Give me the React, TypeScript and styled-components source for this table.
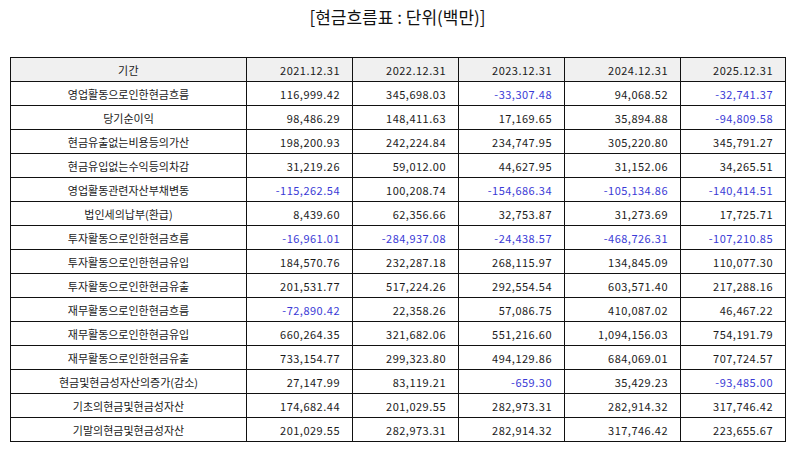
import React from "react";
import styled, { createGlobalStyle } from "styled-components";

const GlobalStyle = createGlobalStyle`
  body {
    margin: 0;
    background: #ffffff;
    font-family: "Noto Sans CJK KR", "Noto Sans", sans-serif;
    color: #1a1a1a;
  }
`;

const Page = styled.div`
  width: 795px;
  padding: 4px 10px 0;
  box-sizing: border-box;
`;

const Title = styled.h1`
  margin: 0 0 28px;
  font-size: 17px;
  font-weight: 400;
  text-align: center;
  line-height: 25px;
  color: #111;
`;

const Table = styled.table`
  width: 775px;
  border-collapse: collapse;
  table-layout: fixed;
  font-size: 11px;
`;

const HeadCell = styled.th<{ $align?: "left" | "center" | "right" }>`
  height: 23px;
  padding: 0 12px 0 0;
  border: 1px solid #111;
  background: #f0f0f0;
  font-weight: 400;
  letter-spacing: 0.5px;
  text-align: ${(p) => p.$align || "right"};
  ${(p) => (p.$align === "center" ? "padding: 0;" : "")}
`;

const LabelCell = styled.td`
  height: 23px;
  padding: 0;
  border: 1px solid #111;
  text-align: center;
`;

const ValueCell = styled.td<{ $negative?: boolean }>`
  height: 23px;
  padding: 0 12px 0 0;
  border: 1px solid #111;
  text-align: right;
  letter-spacing: 0.5px;
  color: ${(p) => (p.$negative ? "#3a3ad6" : "#1a1a1a")};
`;

const periods = [
  "2021.12.31",
  "2022.12.31",
  "2023.12.31",
  "2024.12.31",
  "2025.12.31",
];

const widths = [236, 106, 106, 106, 116, 105];

const rows: [string, string[]][] = [
  ["영업활동으로인한현금흐름", ["116,999.42", "345,698.03", "-33,307.48", "94,068.52", "-32,741.37"]],
  ["당기순이익", ["98,486.29", "148,411.63", "17,169.65", "35,894.88", "-94,809.58"]],
  ["현금유출없는비용등의가산", ["198,200.93", "242,224.84", "234,747.95", "305,220.80", "345,791.27"]],
  ["현금유입없는수익등의차감", ["31,219.26", "59,012.00", "44,627.95", "31,152.06", "34,265.51"]],
  ["영업활동관련자산부채변동", ["-115,262.54", "100,208.74", "-154,686.34", "-105,134.86", "-140,414.51"]],
  ["법인세의납부(환급)", ["8,439.60", "62,356.66", "32,753.87", "31,273.69", "17,725.71"]],
  ["투자활동으로인한현금흐름", ["-16,961.01", "-284,937.08", "-24,438.57", "-468,726.31", "-107,210.85"]],
  ["투자활동으로인한현금유입", ["184,570.76", "232,287.18", "268,115.97", "134,845.09", "110,077.30"]],
  ["투자활동으로인한현금유출", ["201,531.77", "517,224.26", "292,554.54", "603,571.40", "217,288.16"]],
  ["재무활동으로인한현금흐름", ["-72,890.42", "22,358.26", "57,086.75", "410,087.02", "46,467.22"]],
  ["재무활동으로인한현금유입", ["660,264.35", "321,682.06", "551,216.60", "1,094,156.03", "754,191.79"]],
  ["재무활동으로인한현금유출", ["733,154.77", "299,323.80", "494,129.86", "684,069.01", "707,724.57"]],
  ["현금및현금성자산의증가(감소)", ["27,147.99", "83,119.21", "-659.30", "35,429.23", "-93,485.00"]],
  ["기초의현금및현금성자산", ["174,682.44", "201,029.55", "282,973.31", "282,914.32", "317,746.42"]],
  ["기말의현금및현금성자산", ["201,029.55", "282,973.31", "282,914.32", "317,746.42", "223,655.67"]],
];

const App = () => {
  return (
    <Page>
      <GlobalStyle />
      <Title>[현금흐름표 : 단위(백만)]</Title>
      <Table>
        <colgroup>
          {widths.map((w, i) => (
            <col key={i} style={{ width: w }} />
          ))}
        </colgroup>
        <thead>
          <tr>
            <HeadCell $align="center">기간</HeadCell>
            {periods.map((p) => (
              <HeadCell key={p}>{p}</HeadCell>
            ))}
          </tr>
        </thead>
        <tbody>
          {rows.map(([label, values]) => (
            <tr key={label}>
              <LabelCell>{label}</LabelCell>
              {values.map((v, i) => (
                <ValueCell key={i} $negative={v.startsWith("-")}>
                  {v}
                </ValueCell>
              ))}
            </tr>
          ))}
        </tbody>
      </Table>
    </Page>
  );
};

export default App;
